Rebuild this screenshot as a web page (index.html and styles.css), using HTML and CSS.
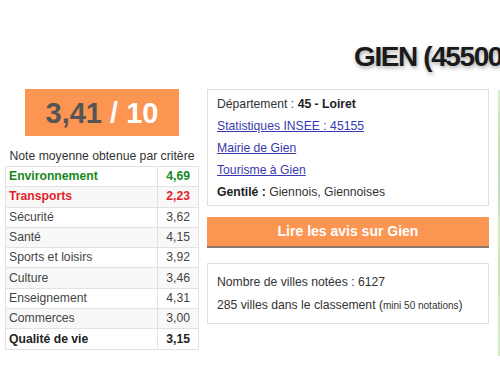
FILE: index.html
```html
<!DOCTYPE html>
<html lang="fr">
  <head>
    <meta charset="UTF-8" />
    <title>Gien</title>
    <link rel="stylesheet" href="styles.css">
  </head>
  <body>
    <h1 class="city-title">GIEN (45500)</h1>

    <div class="main">
      <div class="left-col">
        <div class="score"><span class="score-val">3,41</span> / 10</div>
        <div class="score-caption">Note moyenne obtenue par critère</div>
        <table class="criteria">
          <tr class="good"><td>Environnement</td><td class="val">4,69</td></tr>
          <tr class="bad"><td>Transports</td><td class="val">2,23</td></tr>
          <tr><td>Sécurité</td><td class="val">3,62</td></tr>
          <tr><td>Santé</td><td class="val">4,15</td></tr>
          <tr><td>Sports et loisirs</td><td class="val">3,92</td></tr>
          <tr><td>Culture</td><td class="val">3,46</td></tr>
          <tr><td>Enseignement</td><td class="val">4,31</td></tr>
          <tr><td>Commerces</td><td class="val">3,00</td></tr>
          <tr class="total"><td>Qualité de vie</td><td class="val">3,15</td></tr>
        </table>
      </div>

      <div class="right-col">
        <div class="info-box">
          <p>Département : <b>45 - Loiret</b></p>
          <p><a href="#">Statistiques INSEE : 45155</a></p>
          <p><a href="#">Mairie de Gien</a></p>
          <p><a href="#">Tourisme à Gien</a></p>
          <p><b>Gentilé :</b> Giennois, Giennoises</p>
        </div>
        <a class="reviews-btn" href="#">Lire les avis sur Gien</a>
        <div class="info-box stats">
          <p>Nombre de villes notées : 6127</p>
          <p>285 villes dans le classement (<small>mini 50 notations</small>)</p>
        </div>
      </div>

      <div class="map"></div>
    </div>
  </body>
</html>
```

FILE: styles.css
```css
body {
  margin: 0;
  background-color: #fff;
  font-family: "Liberation Sans", Arial, sans-serif;
  font-size: 12.2px;
  color: #333;
  overflow: hidden;
}

.city-title {
  margin: 0;
  padding: 41px 0 0 354px;
  height: 89px;
  box-sizing: border-box;
  font-size: 28px;
  line-height: 32px;
  letter-spacing: -1.4px;
  font-weight: bold;
  color: #1a1a1a;
  white-space: nowrap;
  overflow: hidden;
  text-shadow: 1px 2px 4px rgba(0, 0, 0, 0.35);
}

.main {
  display: flex;
  align-items: flex-start;
  padding-left: 5px;
}

.left-col {
  flex-shrink: 0;
  width: 194px;
  display: flex;
  flex-direction: column;
  align-items: center;
}

.score {
  width: 154px;
  height: 47px;
  line-height: 48px;
  background-color: #fc9452;
  color: #fff;
  font-size: 29px;
  font-weight: bold;
  text-align: center;
}
.score-val {
  color: #555;
}

.score-caption {
  margin-top: 13px;
  margin-bottom: 3px;
  white-space: nowrap;
  color: #333;
}

.criteria {
  width: 194px;
  border-collapse: collapse;
  border: 1px solid #e2e2e2;
}
.criteria td {
  height: 19.3px;
  padding: 0 0 0 3px;
  border: 1px solid #e2e2e2;
  line-height: 19px;
  color: #444;
}
.criteria tr:nth-child(even) td {
  background-color: #f8f8f8;
}
.criteria .val {
  width: 32px;
  padding: 0 8px 0 0;
  text-align: right;
}
.criteria .good td {
  color: #17891c;
  font-weight: bold;
}
.criteria .bad td {
  color: #e01f2b;
  font-weight: bold;
}
.criteria .total td {
  color: #222;
  font-weight: bold;
}

.right-col {
  flex-shrink: 0;
  width: 282px;
  margin-left: 8px;
  display: flex;
  flex-direction: column;
}

.info-box {
  border: 1px solid #e0e0e0;
  padding: 3px 9px 2px;
}
.info-box p {
  margin: 0;
  line-height: 22px;
}
.info-box b {
  color: #222;
}
.info-box a {
  color: #3a3ab0;
}

.reviews-btn {
  display: block;
  margin-top: 11px;
  height: 29px;
  line-height: 29px;
  background-color: #fc9452;
  border-bottom: 2px solid #8a7a70;
  color: #fff;
  font-size: 14px;
  font-weight: bold;
  text-align: center;
  text-decoration: none;
}

.stats {
  margin-top: 15px;
  padding: 7px 9px 6px;
}
.stats p {
  line-height: 23px;
}
.stats small {
  font-size: 10px;
}

.map {
  flex-shrink: 0;
  margin-left: 9px;
  margin-top: 1px;
  width: 20px;
  height: 266px;
  background: linear-gradient(180deg, #d8ecc8 0%, #c6e3b4 20%, #bfdcc6 35%, #d4e9c0 50%, #cfe6bb 70%, #d8ebc6 100%);
}
```
